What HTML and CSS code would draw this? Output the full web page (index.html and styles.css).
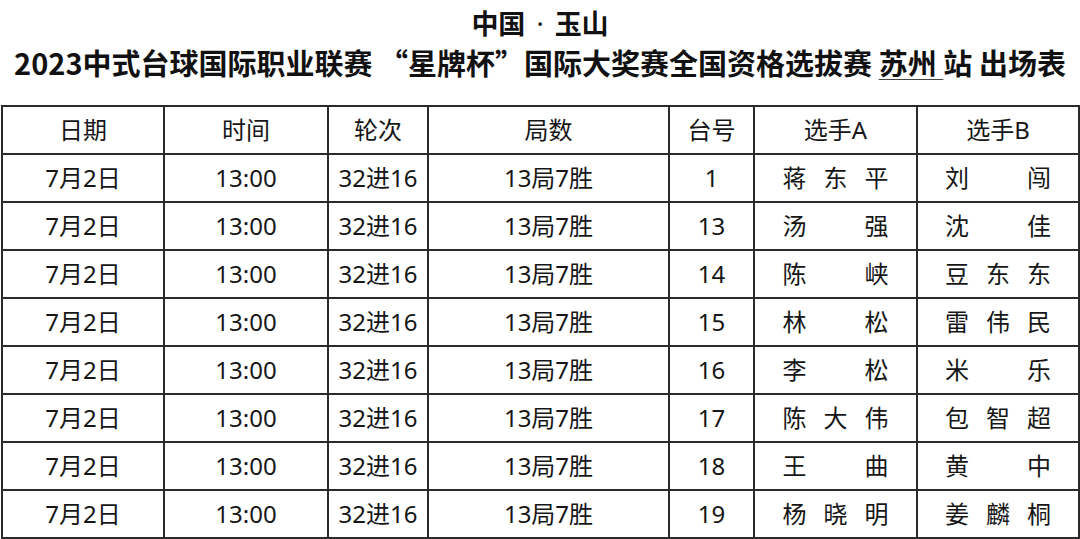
FILE: index.html
```html
<!DOCTYPE html>
<html lang="zh-CN">
<head>
<meta charset="utf-8">
<title>出场表</title>
<link rel="stylesheet" href="styles.css">
</head>
<body>
<div class="title">
  <div class="t1">中国<span class="dot">·</span>玉山</div>
  <div class="t2">2023中式台球国际职业联赛 “星牌杯”国际大奖赛全国资格选拔赛 <u>苏州 </u>站 出场表</div>
</div>
<table class="sched">
  <colgroup>
    <col class="c1"><col class="c2"><col class="c3"><col class="c4"><col class="c5"><col class="c6"><col class="c7">
  </colgroup>
  <thead>
    <tr><th>日期</th><th>时间</th><th>轮次</th><th>局数</th><th>台号</th><th>选手A</th><th>选手B</th></tr>
  </thead>
  <tbody>
    <tr><td>7月2日</td><td>13:00</td><td>32进16</td><td>13局7胜</td><td>1</td>
      <td><div class="nm"><span>蒋</span><span>东</span><span>平</span></div></td>
      <td><div class="nm"><span>刘</span><span>闯</span></div></td></tr>
    <tr><td>7月2日</td><td>13:00</td><td>32进16</td><td>13局7胜</td><td>13</td>
      <td><div class="nm"><span>汤</span><span>强</span></div></td>
      <td><div class="nm"><span>沈</span><span>佳</span></div></td></tr>
    <tr><td>7月2日</td><td>13:00</td><td>32进16</td><td>13局7胜</td><td>14</td>
      <td><div class="nm"><span>陈</span><span>峡</span></div></td>
      <td><div class="nm"><span>豆</span><span>东</span><span>东</span></div></td></tr>
    <tr><td>7月2日</td><td>13:00</td><td>32进16</td><td>13局7胜</td><td>15</td>
      <td><div class="nm"><span>林</span><span>松</span></div></td>
      <td><div class="nm"><span>雷</span><span>伟</span><span>民</span></div></td></tr>
    <tr><td>7月2日</td><td>13:00</td><td>32进16</td><td>13局7胜</td><td>16</td>
      <td><div class="nm"><span>李</span><span>松</span></div></td>
      <td><div class="nm"><span>米</span><span>乐</span></div></td></tr>
    <tr><td>7月2日</td><td>13:00</td><td>32进16</td><td>13局7胜</td><td>17</td>
      <td><div class="nm"><span>陈</span><span>大</span><span>伟</span></div></td>
      <td><div class="nm"><span>包</span><span>智</span><span>超</span></div></td></tr>
    <tr><td>7月2日</td><td>13:00</td><td>32进16</td><td>13局7胜</td><td>18</td>
      <td><div class="nm"><span>王</span><span>曲</span></div></td>
      <td><div class="nm"><span>黄</span><span>中</span></div></td></tr>
    <tr><td>7月2日</td><td>13:00</td><td>32进16</td><td>13局7胜</td><td>19</td>
      <td><div class="nm"><span>杨</span><span>晓</span><span>明</span></div></td>
      <td><div class="nm"><span>姜</span><span>麟</span><span>桐</span></div></td></tr>
  </tbody>
</table>
</body>
</html>
```
FILE: styles.css
```css
html, body {
  margin: 0;
  padding: 0;
  background: #ffffff;
}
body {
  width: 1080px;
  height: 539px;
  overflow: hidden;
  font-family: "Noto Sans", "Noto Sans CJK SC", sans-serif;
  color: #161616;
}
.title {
  font-family: "Noto Sans CJK SC", sans-serif;
  font-weight: 700;
  text-align: center;
  color: #111;
  padding-top: 4px;
  margin-bottom: 24px;
}
.t1 {
  font-size: 27px;
  line-height: 38px;
}
.dot {
  font-family: "Noto Sans", sans-serif;
  font-weight: 400;
  padding: 0 11px;
}
.t2 {
  font-size: 29px;
  line-height: 38px;
  white-space: nowrap;
}
.t2 u {
  text-decoration-thickness: 1px;
  text-underline-offset: 4px;
  text-decoration-color: #444;
}
.sched {
  border-collapse: collapse;
  table-layout: fixed;
  margin-left: 1px;
  width: 1077px;
}
.c1 { width: 162px; }
.c2 { width: 164px; }
.c3 { width: 100px; }
.c4 { width: 241px; }
.c5 { width: 85px; }
.c6 { width: 163px; }
.c7 { width: 162px; }
.sched th, .sched td {
  border: 2px solid #2a2a2a;
  height: 46px;
  padding: 0;
  text-align: center;
  vertical-align: middle;
  font-size: 24px;
  font-weight: 400;
  line-height: 30px;
  white-space: nowrap;
}
.nm {
  display: flex;
  justify-content: space-between;
  width: 106px;
  margin: 0 auto;
}
```
